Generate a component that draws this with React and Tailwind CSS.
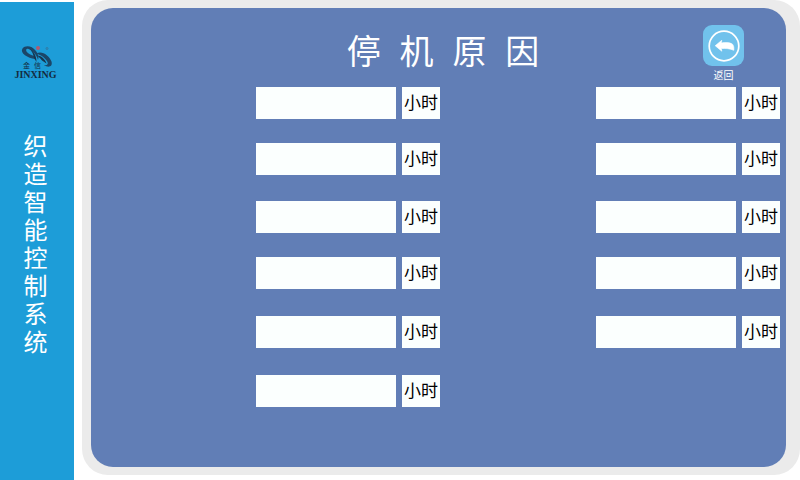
import React from "react";

const LEFT = ["r1", "r2", "r3", "r4", "r5", "r6"];
const RIGHT = ["r7", "r8", "r9", "r10", "r11"];

function Logo() {
  return (
    <div className="flex flex-col items-center text-[#142c40]">
      <svg className="h-[26px] w-[42px]" viewBox="0 0 42 26" role="img" aria-label="金信 JINXING">
        <path
          d="M8.500 4.500C11 1 18 1.500 21.500 6.500C24.500 10 25 13.500 24 16C22.500 10 18 6 14.500 5C12.500 4.500 11.500 5.500 12.500 7.500C14 9.500 17 11 20.500 12L21 15C14 14 5.500 9.500 8.500 4.500Z"
          fill="#1b4668"
        />
        <path d="M15 4.500C20 7 22.500 12 22.500 18L20 14C19.500 10 18 7 15 4.500Z" fill="#17354f" />
        <path
          d="M22.500 9.500C28 6.500 35 11.500 37.500 17.500C39 23 34 24 30 21C33 21.500 34.500 20.500 33.500 18C31.500 14 27 11 22.500 9.500Z"
          fill="#1b4668"
        />
        <path d="M23 11.500C27 11.500 31 15 32.500 19.500L28 16.500C26 14 24.500 12.500 23 11.500Z" fill="#17354f" />
        <circle cx="24" cy="4" r="2" fill="#b35a70" />
        <circle cx="33" cy="4.500" r="1" fill="none" stroke="#3b6c8c" strokeWidth=".7" />
        <text x="9" y="24" fontSize="7" fill="#142c40" fontFamily="'Noto Sans CJK SC', sans-serif">金</text>
        <text x="20" y="24" fontSize="7" fill="#142c40" fontFamily="'Noto Sans CJK SC', sans-serif">信</text>
      </svg>
      <span className="font-['Liberation_Serif',serif] text-[10px] leading-[10px] font-bold">JINXING</span>
    </div>
  );
}

function HourField({ id }) {
  return (
    <div className="flex items-start justify-end gap-[6px]">
      <input id={id} type="text" className="h-8 w-[140px] bg-[#fbfffe] px-2 text-base text-black outline-none" />
      <label
        htmlFor={id}
        className="h-8 w-[38px] bg-[#fbfffe] pt-px text-center text-[17px] leading-8 whitespace-nowrap text-black"
      >
        小时
      </label>
    </div>
  );
}

function Column({ ids }) {
  return (
    <div className="grid grid-rows-[56px_58px_56px_59px_59px_32px]">
      {ids.map((id) => (
        <HourField key={id} id={id} />
      ))}
    </div>
  );
}

export default function App() {
  return (
    <div className="flex min-h-screen bg-white font-['Liberation_Sans','Noto_Sans_CJK_SC',sans-serif]">
      <aside className="mt-[2px] flex w-[74px] shrink-0 flex-col items-center bg-[#1d9dd8] pt-[42px] pr-[3px]">
        <Logo />
        <h2 className="mt-[53px] w-6 text-2xl leading-7 break-all text-white">织造智能控制系统</h2>
      </aside>

      <div className="mb-[5px] ml-2 flex grow rounded-[26px] bg-[#ebebeb] pt-2 pr-[14px] pb-2 pl-[9px]">
        <main className="grow rounded-[22px] bg-[#617eb6] pl-[9px]">
          <header className="grid h-[79px] grid-cols-[1fr_auto_1fr] items-start pt-[17px]">
            <h1 className="col-start-2 text-[34px] leading-[54px] whitespace-pre text-white">停  机  原  因</h1>
            <button type="button" className="mr-[42px] flex w-[41px] flex-col items-center justify-self-end">
              <span className="flex h-[41px] w-[41px] items-center justify-center rounded-[9px] bg-[#71c2ec]">
                <svg className="h-8 w-8" viewBox="0 0 32 32" aria-hidden="true">
                  <circle cx="16" cy="16" r="14.800" fill="none" stroke="#fff" strokeWidth="1.700" />
                  <path
                    d="M7.200 15.700L13.800 10.300L13.300 13C18 12.300 22 12.500 24.500 14.200C25.900 15.600 26 18 25.800 20.300C22 18.600 17.500 18.200 13.300 18.600L13.800 21.200Z"
                    fill="#fff"
                    stroke="#fff"
                    strokeWidth=".6"
                    strokeLinejoin="round"
                  />
                </svg>
              </span>
              <span className="text-[10px] leading-5 text-white">返回</span>
            </button>
          </header>

          <form className="grid grid-cols-2 pr-[6px]">
            <Column ids={LEFT} />
            <Column ids={RIGHT} />
          </form>
        </main>
      </div>
    </div>
  );
}
